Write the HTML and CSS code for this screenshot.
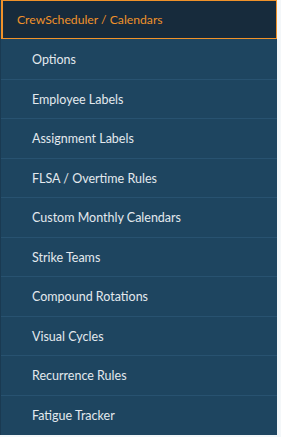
FILE: index.html
```html
<!DOCTYPE html>
<html>
<head>
<meta charset="utf-8">
<link rel="stylesheet" href="styles.css">
</head>
<body>
<nav class="menu">
  <div class="menu-header">CrewScheduler / Calendars</div>
  <ul class="menu-list">
    <li class="menu-item">Options</li>
    <li class="menu-item">Employee Labels</li>
    <li class="menu-item">Assignment Labels</li>
    <li class="menu-item">FLSA / Overtime Rules</li>
    <li class="menu-item">Custom Monthly Calendars</li>
    <li class="menu-item">Strike Teams</li>
    <li class="menu-item">Compound Rotations</li>
    <li class="menu-item">Visual Cycles</li>
    <li class="menu-item">Recurrence Rules</li>
    <li class="menu-item">Fatigue Tracker</li>
  </ul>
</nav>
</body>
</html>
```
FILE: styles.css
```css
html, body {
  margin: 0;
  padding: 0;
  background: #f4f7f9;
}
.menu {
  width: 277px;
  background: #1e4560;
  font-family: Lato, "Open Sans", sans-serif;
  font-size: 12.5px;
  border-left: 1px solid #1a3a52;
  box-sizing: border-box;
}
.menu-header {
  height: 39px;
  box-sizing: border-box;
  background: #172b3c;
  border: 1px solid #f0922a;
  border-left-width: 2px;
  color: #f0922a;
  padding-left: 14px;
  font-size: 12.2px;
  display: flex;
  align-items: center;
}
.menu-list {
  list-style: none;
  margin: 0;
  padding: 0 0 1px 0;
}
.menu-item {
  height: 39.5px;
  box-sizing: border-box;
  display: flex;
  align-items: center;
  padding-left: 31px;
  padding-top: 1px;
  color: #e3e9ee;
  border-top: 1px solid #285270;
}
.menu-item:first-child {
  border-top: none;
}
```
